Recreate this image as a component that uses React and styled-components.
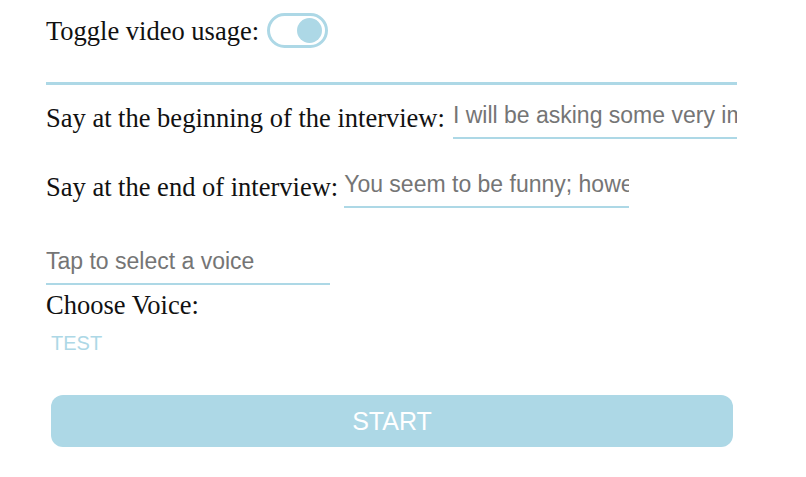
import React, { useState } from "react";
import styled, { createGlobalStyle } from "styled-components";

const GlobalStyle = createGlobalStyle`
  html, body {
    margin: 0;
    padding: 0;
    background: #ffffff;
  }
  body {
    font-family: "Liberation Serif", serif;
  }
`;

const Page = styled.div`
  width: 806px;
  padding: 13px 69px 0 46px;
  box-sizing: border-box;
  display: flex;
  flex-direction: column;
`;

const Row = styled.div`
  display: flex;
  align-items: center;
  gap: ${(p) => p.gap || 6}px;
  margin-top: ${(p) => p.top || 0}px;
`;

const Label = styled.span`
  font-family: "Liberation Serif", serif;
  font-size: 26.5px;
  line-height: 30px;
  color: #111;
  white-space: nowrap;
  margin-top: ${(p) => p.top || 0}px;
`;

const Switch = styled.button`
  width: 61px;
  height: 35px;
  border: 3px solid #add8e6;
  border-radius: 18px;
  background: #fff;
  padding: 0 3px;
  display: flex;
  align-items: center;
  justify-content: ${(p) => (p.on ? "flex-end" : "flex-start")};
  box-sizing: border-box;
  cursor: pointer;
`;

const Knob = styled.span`
  width: 25px;
  height: 25px;
  border-radius: 50%;
  background: #add8e6;
`;

const Divider = styled.hr`
  border: none;
  height: 3px;
  background: #add8e6;
  margin: 34px 0 0;
  width: 691px;
`;

const TextInput = styled.input`
  font-family: "Liberation Sans", Arial, sans-serif;
  font-size: 23px;
  line-height: 26px;
  height: 26px;
  color: #757575;
  border: none;
  border-bottom: 2px solid #add8e6;
  outline: none;
  padding: 6px 0 9px;
  width: ${(p) => p.w}px;
  background: transparent;
  margin-top: ${(p) => p.top || 0}px;
  &::placeholder {
    color: #757575;
  }
`;

const TestButton = styled.button`
  align-self: flex-start;
  border: none;
  background: none;
  padding: 0 5px;
  margin-top: 11px;
  font-family: "Liberation Sans", Arial, sans-serif;
  font-size: 20px;
  line-height: 24px;
  color: #add8e6;
  text-transform: uppercase;
  cursor: pointer;
`;

const StartButton = styled.button`
  width: 682px;
  height: 52px;
  margin: 40px 0 0 5px;
  border: none;
  border-radius: 12px;
  background: #add8e6;
  color: #fff;
  font-family: "Liberation Sans", Arial, sans-serif;
  font-size: 25px;
  cursor: pointer;
`;

export default function App() {
  const [video, setVideo] = useState(true);

  return (
    <>
      <GlobalStyle />
      <Page>
        <Row gap={8}>
          <Label>Toggle video usage:</Label>
          <Switch on={video ? 1 : 0} onClick={() => setVideo(!video)}>
            <Knob />
          </Switch>
        </Row>
        <Divider />
        <Row top={11} gap={8}>
          <Label>Say at the beginning of the interview:</Label>
          <TextInput
            w={284}
            defaultValue="I will be asking some very important questions"
          />
        </Row>
        <Row top={26}>
          <Label>Say at the end of interview:</Label>
          <TextInput
            w={285}
            defaultValue="You seem to be funny; however, I have to go"
          />
        </Row>
        <TextInput w={284} placeholder="Tap to select a voice" top={34} />
        <Label top={5}>Choose Voice:</Label>
        <TestButton>Test</TestButton>
        <StartButton>START</StartButton>
      </Page>
    </>
  );
}
